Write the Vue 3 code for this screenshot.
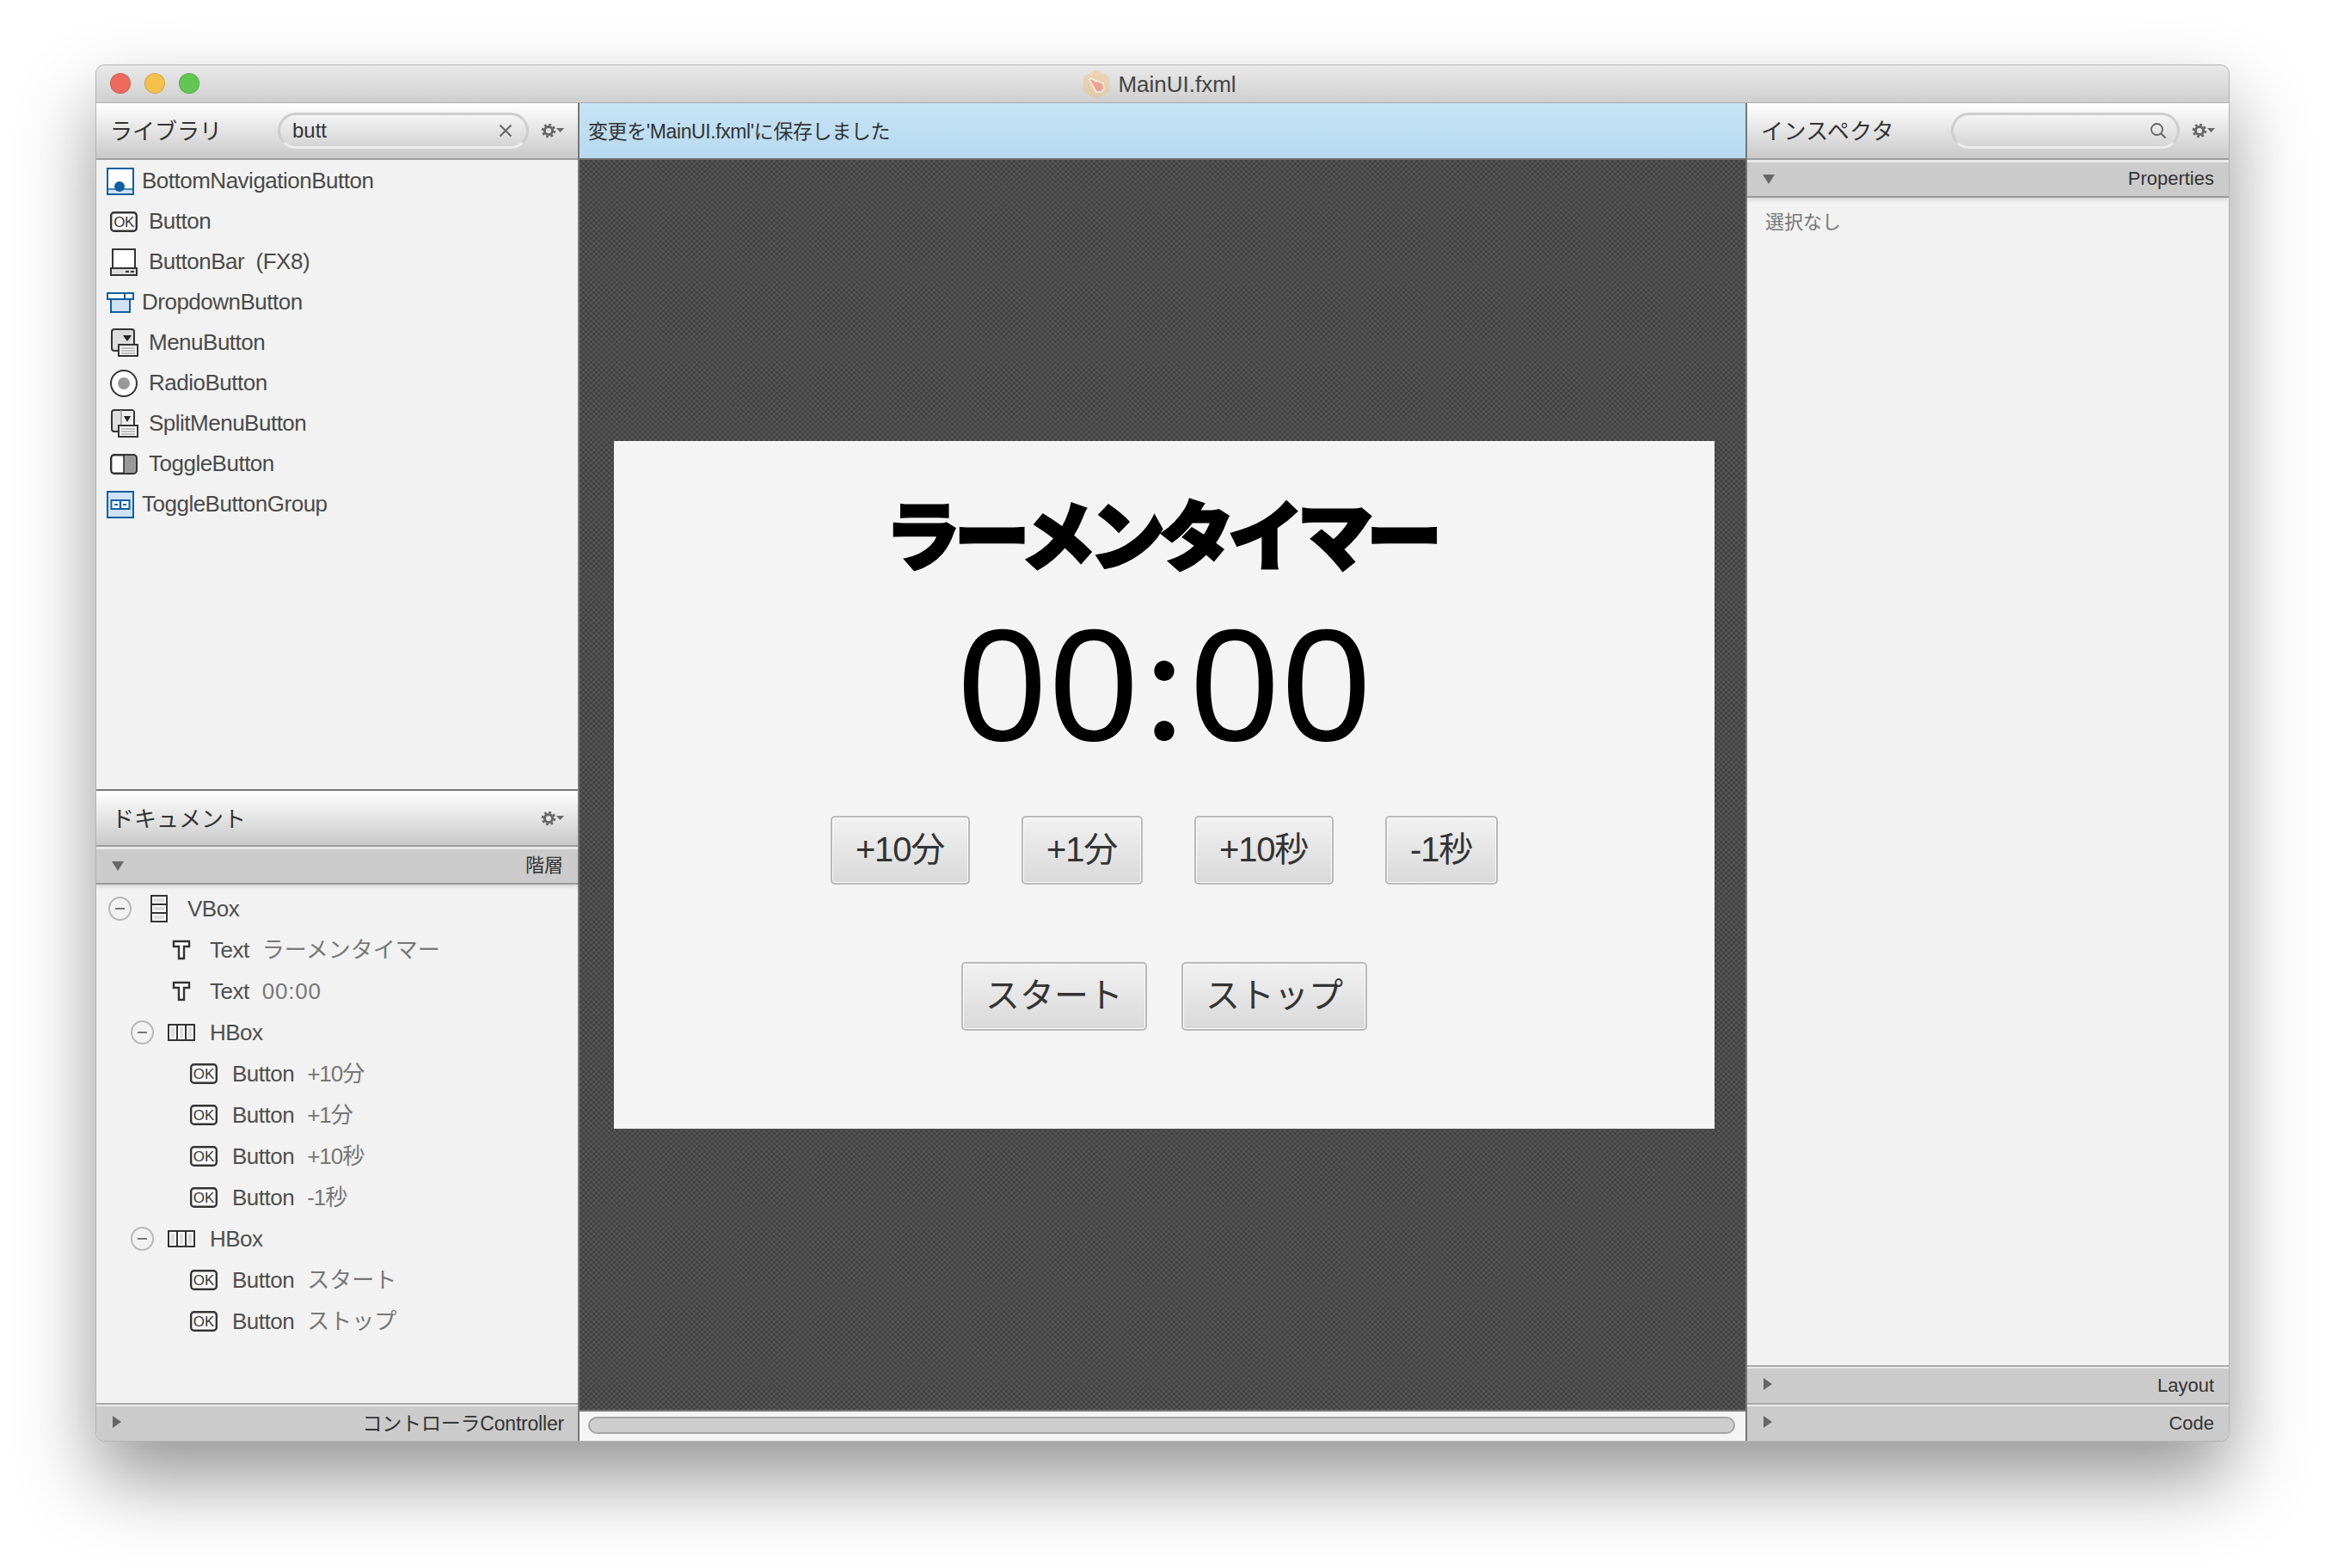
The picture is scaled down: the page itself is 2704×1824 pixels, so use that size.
<template>
  <div class="page">
    <svg class="defs" width="0" height="0">
      <symbol id="i-bottom" viewBox="0 0 32 32">
        <rect x="1" y="1" width="30" height="30" fill="#fff" stroke="#0f5f9e" stroke-width="2" />
        <rect x="2" y="25" width="28" height="5" fill="#cfe2f6" />
        <path d="M1 25h30" stroke="#0f5f9e" stroke-width="1.5" />
        <circle cx="15" cy="22" r="6" fill="#0f5f9e" />
      </symbol>
      <symbol id="i-ok" viewBox="0 0 32 24">
        <rect x="1.2" y="1.2" width="29.6" height="21.6" rx="3.5" fill="#fff" stroke="#333" stroke-width="2.4" />
        <text x="16" y="18.2" text-anchor="middle" font-family="Liberation Sans" font-size="17" fill="#333">OK</text>
      </symbol>
      <symbol id="i-bar" viewBox="0 0 32 32">
        <rect x="3" y="1" width="26" height="23" fill="#fff" stroke="#333" stroke-width="2" />
        <rect x="1" y="23" width="30" height="8" fill="#ddd" stroke="#333" stroke-width="2" />
        <path d="M18 27h4M24 27h4" stroke="#333" stroke-width="2" />
      </symbol>
      <symbol id="i-drop" viewBox="0 0 32 24">
        <path d="M1 1h30v7H1zM21 1v7" fill="#fff" stroke="#0f5f9e" stroke-width="2" />
        <rect x="5" y="8" width="22" height="15" fill="#cfe2f6" stroke="#0f5f9e" stroke-width="2" />
      </symbol>
      <symbol id="i-menu" viewBox="0 0 34 34">
        <rect x="2" y="1" width="26" height="25" rx="3" fill="#ddd" stroke="#333" stroke-width="2" />
        <path d="M15 8h10l-5 7z" fill="#222" />
        <rect x="10" y="19" width="22" height="13" fill="#fff" stroke="#333" stroke-width="2" />
        <path d="M13 23h16M13 26h16M13 29h16" stroke="#aaa" stroke-width="1.4" />
      </symbol>
      <symbol id="i-radio" viewBox="0 0 32 34">
        <circle cx="16" cy="17" r="15" fill="#fff" stroke="#333" stroke-width="2" />
        <circle cx="16" cy="17" r="7" fill="#999" />
      </symbol>
      <symbol id="i-split" viewBox="0 0 34 34">
        <rect x="2" y="1" width="26" height="25" rx="3" fill="#ddd" stroke="#333" stroke-width="2" />
        <rect x="13" y="2" width="14" height="23" fill="#eee" />
        <path d="M13 1v25" stroke="#999" stroke-width="1.5" />
        <path d="M16 8h8l-4 7z" fill="#222" />
        <rect x="10" y="19" width="22" height="13" fill="#fff" stroke="#333" stroke-width="2" />
        <path d="M13 23h16M13 26h16M13 29h16" stroke="#aaa" stroke-width="1.4" />
      </symbol>
      <symbol id="i-toggle" viewBox="0 0 32 24">
        <rect x="1.2" y="1.2" width="29.6" height="21.6" rx="3.5" fill="#fff" stroke="#333" stroke-width="2.4" />
        <path d="M16 2h11.5a2.3 2.3 0 0 1 2.3 2.3v15.4a2.3 2.3 0 0 1-2.3 2.3H16z" fill="#999" />
        <path d="M16 1v22" stroke="#333" stroke-width="1.6" />
      </symbol>
      <symbol id="i-group" viewBox="0 0 32 32">
        <rect x="1" y="1" width="30" height="30" fill="#cfe2f6" stroke="#0f5f9e" stroke-width="2" />
        <rect x="5.5" y="11" width="21" height="10" fill="#fff" stroke="#0f5f9e" stroke-width="2" />
        <path d="M16 10v12" stroke="#0f5f9e" stroke-width="2.4" />
        <path d="M9 16h4M19 16h4" stroke="#0f5f9e" stroke-width="2" />
      </symbol>
      <symbol id="i-vbox" viewBox="0 0 20 32">
        <rect x="1" y="1" width="18" height="30" fill="#fff" stroke="#333" stroke-width="2" />
        <path d="M1 11h18M1 21h18" stroke="#333" stroke-width="2" />
        <path d="M4 6h12M4 16h12M4 26h12" stroke="#ddd" stroke-width="4" />
      </symbol>
      <symbol id="i-hbox" viewBox="0 0 32 20">
        <rect x="1" y="1" width="30" height="18" fill="#fff" stroke="#333" stroke-width="2" />
        <path d="M11 1v18M21 1v18" stroke="#333" stroke-width="2" />
        <path d="M6 4v12M16 4v12M26 4v12" stroke="#ddd" stroke-width="4" />
      </symbol>
      <symbol id="i-text" viewBox="0 0 22 24">
        <path d="M2 2h18v6h-6v14H8V8H2z" fill="#fff" stroke="#333" stroke-width="2.4" />
      </symbol>
      <symbol id="i-gear" viewBox="0 0 28 18">
        <circle cx="9" cy="9" r="4.6" fill="none" stroke="#666" stroke-width="3" />
        <circle cx="9" cy="9" r="7" fill="none" stroke="#666" stroke-width="2.6" stroke-dasharray="2.9 2.6" />
        <path d="M18 6h9l-4.5 5z" fill="#666" />
      </symbol>
    </svg>

    <div class="window">
      <div class="titlebar">
        <svg class="logo" viewBox="0 0 34 34">
          <g fill="#f2c27c" opacity="0.45">
            <ellipse cx="17" cy="17" rx="11" ry="16.5" />
            <ellipse cx="17" cy="17" rx="11" ry="16.5" transform="rotate(60 17 17)" />
            <ellipse cx="17" cy="17" rx="11" ry="16.5" transform="rotate(120 17 17)" />
          </g>
          <path d="M9 12l2-2 6 4 1-1 7 3 1 6-3 4h-6l-4-7z" fill="#e8a491" stroke="#f8efe6" stroke-width="1.6" />
        </svg>
        <span class="win-title">MainUI.fxml</span>
        <div class="lights">
          <i class="light red"></i>
          <i class="light yellow"></i>
          <i class="light green"></i>
        </div>
      </div>

      <div class="main">
        <aside class="side">
          <div class="head">
            <span class="head-title">ライブラリ</span>
            <div class="search lib-search">
              <span class="query">butt</span>
              <svg class="clear" viewBox="0 0 16 16"><path d="M1.5 1.5l13 13M14.5 1.5l-13 13" stroke="#666" stroke-width="2" /></svg>
            </div>
            <svg class="gear"><use href="#i-gear" /></svg>
          </div>
          <div class="lib-list">
            <div v-for="item in library" :key="item.label" class="lib-row" :class="{ blue: item.blue }">
              <span class="lib-slot">
                <svg :width="item.w || 32" :height="item.h"><use :href="'#i-' + item.icon" /></svg>
              </span>
              <span>{{ item.label }}</span>
            </div>
          </div>

          <div class="head doc-head">
            <span class="head-title">ドキュメント</span>
            <svg class="gear"><use href="#i-gear" /></svg>
          </div>
          <div class="sub open">
            <i class="tri-down"></i>
            <span>階層</span>
          </div>
          <div class="tree">
            <div
              v-for="(node, i) in tree"
              :key="i"
              class="tree-row"
              :style="{ paddingLeft: 14 + node.level * 26 + 'px' }"
            >
              <span class="toggle-slot">
                <span v-if="node.open" class="minus"></span>
              </span>
              <span class="tree-ico">
                <svg :width="node.w" :height="node.h"><use :href="'#i-' + node.icon" /></svg>
              </span>
              <span class="name">{{ node.name }}</span>
              <span v-if="node.value" class="val" :class="valueClass(node.value)">{{ node.value }}</span>
            </div>
          </div>
          <div class="sub">
            <i class="tri-right"></i>
            <span class="ctrl">コントローラController</span>
          </div>
        </aside>

        <section class="center">
          <div class="message">変更を'MainUI.fxml'に保存しました</div>
          <div class="canvas">
            <div class="card">
              <div class="app-title">ラーメンタイマー</div>
              <div class="time">00<span class="colon">:</span>00</div>
              <div class="btn-row first">
                <button v-for="b in addButtons" :key="b" type="button" class="fx-btn add">{{ b }}</button>
              </div>
              <div class="btn-row second">
                <button type="button" class="fx-btn">スタート</button>
                <button type="button" class="fx-btn">ストップ</button>
              </div>
            </div>
          </div>
          <div class="hscroll"><div class="thumb"></div></div>
        </section>

        <aside class="side right">
          <div class="head">
            <span class="head-title">インスペクタ</span>
            <div class="search insp-search">
              <svg class="lens" viewBox="0 0 20 20">
                <circle cx="8.5" cy="8.5" r="6.5" fill="none" stroke="#666" stroke-width="1.8" />
                <path d="M13 13l5.5 5.5" stroke="#666" stroke-width="2" />
              </svg>
            </div>
            <svg class="gear"><use href="#i-gear" /></svg>
          </div>
          <div class="sub open">
            <i class="tri-down"></i>
            <span>Properties</span>
          </div>
          <div class="insp-body">選択なし</div>
          <div class="sub">
            <i class="tri-right"></i>
            <span>Layout</span>
          </div>
          <div class="sub">
            <i class="tri-right"></i>
            <span>Code</span>
          </div>
        </aside>
      </div>
    </div>
  </div>
</template>

<script setup>
const library = [
  { label: "BottomNavigationButton", icon: "bottom", h: 32, blue: true },
  { label: "Button", icon: "ok", h: 24 },
  { label: "ButtonBar  (FX8)", icon: "bar", h: 32 },
  { label: "DropdownButton", icon: "drop", h: 24, blue: true },
  { label: "MenuButton", icon: "menu", w: 34, h: 34 },
  { label: "RadioButton", icon: "radio", h: 34 },
  { label: "SplitMenuButton", icon: "split", w: 34, h: 34 },
  { label: "ToggleButton", icon: "toggle", h: 24 },
  { label: "ToggleButtonGroup", icon: "group", h: 32, blue: true }
];

const button = (value) => ({ level: 2, icon: "ok", w: 32, h: 24, name: "Button", value });

const tree = [
  { level: 0, open: true, icon: "vbox", w: 20, h: 32, name: "VBox" },
  { level: 1, icon: "text", w: 22, h: 24, name: "Text", value: "ラーメンタイマー" },
  { level: 1, icon: "text", w: 22, h: 24, name: "Text", value: "00:00" },
  { level: 1, open: true, icon: "hbox", w: 32, h: 20, name: "HBox" },
  button("+10分"),
  button("+1分"),
  button("+10秒"),
  button("-1秒"),
  { level: 1, open: true, icon: "hbox", w: 32, h: 20, name: "HBox" },
  button("スタート"),
  button("ストップ")
];

const addButtons = ["+10分", "+1分", "+10秒", "-1秒"];

function valueClass(value) {
  if (/^[-+]/.test(value)) return "tight";
  if (/^[0-9]/.test(value)) return "wide";
  return "";
}
</script>

<style>
body {
  background: #fff;
}
</style>

<style scoped>
.page {
  box-sizing: border-box;
  width: 2704px;
  height: 1824px;
  padding: 76px 112px 0;
  overflow: hidden;
  background: #fff;
  font-family: "Liberation Sans", "Noto Sans CJK JP", sans-serif;
}

.defs {
  display: none;
}

.window {
  display: flex;
  flex-direction: column;
  height: 1600px;
  border-radius: 10px;
  overflow: hidden;
  box-shadow: 0 0 0 1px #b4b4b4, 0 44px 90px rgba(0, 0, 0, 0.42);
}

.titlebar {
  position: relative;
  box-sizing: border-box;
  display: flex;
  align-items: center;
  justify-content: center;
  gap: 8px;
  height: 44px;
  padding-right: 8px;
  background: linear-gradient(#e9e9e9, #cfcfcf);
  border-bottom: 1px solid #adadad;
}

.logo {
  width: 34px;
  height: 34px;
}

.win-title {
  font-size: 26px;
  color: #444;
  padding-top: 2px;
}

.lights {
  position: absolute;
  left: 16px;
  top: 9px;
  display: flex;
  gap: 16px;
}

.light {
  box-sizing: border-box;
  width: 24px;
  height: 24px;
  border-radius: 50%;
  border: 1px solid rgba(0, 0, 0, 0.14);
}

.red {
  background: #ee6a5f;
}

.yellow {
  background: #f6c04f;
}

.green {
  background: #62c654;
}

.main {
  flex: 1;
  display: grid;
  grid-template-columns: 560px 1360px 560px;
  min-height: 0;
}

.side {
  display: flex;
  flex-direction: column;
  min-height: 0;
  background: #f2f2f2;
}

.head {
  box-sizing: border-box;
  display: flex;
  align-items: center;
  height: 66px;
  padding: 0 15px 0 17px;
  background: linear-gradient(#fff, #c9c9c9);
  border-bottom: 2px solid #a0a0a0;
  flex-shrink: 0;
}

.head-title {
  padding-top: 2px;
  font-size: 26px;
  line-height: 30px;
  color: #333;
  margin-right: auto;
  margin-left: -1px;
}

.right .head-title {
  letter-spacing: 0.4px;
}

.doc-head {
  height: 67px;
  border-top: 2px solid #777;
  padding-left: 19px;
}

.search {
  box-sizing: border-box;
  display: flex;
  align-items: center;
  justify-content: space-between;
  height: 42px;
  border-radius: 22px;
  border: 3px solid #cdcdcd;
  border-bottom-color: #ececec;
}

.lib-search {
  width: 292px;
  padding: 0 16px 0 14px;
}

.insp-search {
  width: 266px;
  padding: 0 12px;
  justify-content: flex-end;
}

.query {
  font-size: 24px;
  color: #333;
}

.clear {
  width: 16px;
  height: 16px;
}

.lens {
  width: 20px;
  height: 20px;
}

.gear {
  width: 28px;
  height: 18px;
  margin-left: 14px;
}

.lib-list {
  box-sizing: border-box;
  height: 732px;
  padding-top: 1px;
  flex-shrink: 0;
  overflow: hidden;
}

.lib-row {
  display: flex;
  align-items: center;
  height: 47px;
  padding-left: 12px;
  font-size: 26px;
  letter-spacing: -0.5px;
  color: #4a4a4a;
  white-space: pre;
}

.lib-slot {
  display: flex;
  align-items: center;
  box-sizing: border-box;
  width: 49px;
  padding-left: 4px;
}

.lib-row.blue .lib-slot {
  width: 41px;
  padding-left: 0;
}

.sub {
  position: relative;
  box-sizing: border-box;
  display: flex;
  align-items: center;
  justify-content: space-between;
  flex-shrink: 0;
  height: 44px;
  padding: 2px 17px 0 20px;
  border-top: 2px solid #aaa;
  background: linear-gradient(#e9e9e9 2px, #cbcbcb 2px);
  font-size: 22px;
  line-height: 26px;
  color: #333;
}

.sub.open {
  border-top: none;
  border-bottom: 2px solid #999;
  background: linear-gradient(#e9e9e9 3px, #cbcbcb 3px);
  box-shadow: 0 2px 5px rgba(0, 0, 0, 0.14);
}

.tri-down {
  width: 0;
  height: 0;
  border-left: 7px solid transparent;
  border-right: 7px solid transparent;
  border-top: 11px solid #666;
  margin-left: -2px;
}

.tri-right {
  width: 0;
  height: 0;
  margin-top: -4px;
  margin-left: -1px;
  border-top: 7px solid transparent;
  border-bottom: 7px solid transparent;
  border-left: 10px solid #666;
}

.tree {
  flex: 1;
  padding-top: 4px;
  overflow: hidden;
}

.tree-row {
  display: flex;
  align-items: center;
  height: 48px;
  font-size: 26px;
  line-height: 30px;
}

.toggle-slot {
  display: block;
  width: 27px;
  height: 28px;
  flex-shrink: 0;
}

.minus {
  position: relative;
  box-sizing: border-box;
  display: block;
  width: 27px;
  height: 28px;
  border-radius: 50%;
  border: 2px solid #b8b8b8;
}

.minus::after {
  content: "";
  position: absolute;
  left: 6px;
  right: 6px;
  top: 11px;
  height: 2px;
  background: #777;
}

.tree-ico {
  display: flex;
  align-items: center;
  justify-content: center;
  width: 64px;
  margin-right: 1px;
  flex-shrink: 0;
}

.name {
  color: #4f4f4f;
  margin-right: 15px;
  letter-spacing: -0.5px;
}

.val {
  color: #777;
}

.val.tight {
  letter-spacing: -1px;
}

.val.wide {
  letter-spacing: 0.8px;
}

.ctrl {
  font-size: 23px;
  letter-spacing: -0.2px;
  margin-right: -1px;
}

.center {
  display: flex;
  flex-direction: column;
  min-height: 0;
  border-left: 2px solid #777;
  border-right: 2px solid #777;
  background: #f4f4f4;
}

.message {
  box-sizing: border-box;
  display: flex;
  align-items: center;
  flex-shrink: 0;
  height: 66px;
  padding: 0 0 2px 10px;
  border-bottom: 2px solid #6f6f6f;
  background: linear-gradient(#c6e3f5, #b7d9ef);
  font-size: 23px;
  letter-spacing: -0.4px;
  color: #333;
}

.canvas {
  flex: 1;
  display: flex;
  align-items: center;
  justify-content: center;
  padding-left: 4px;
  min-height: 0;
  background-color: #4b4b4b;
  background-image: conic-gradient(#545454 25%, #434343 0 50%, #545454 0 75%, #434343 0);
  background-size: 6px 6px;
}

.card {
  display: flex;
  flex-direction: column;
  align-items: center;
  box-sizing: border-box;
  width: 1280px;
  height: 800px;
  padding-top: 53px;
  background: #f4f4f4;
}

.app-title {
  padding-right: 9px;
  font-size: 88px;
  line-height: 120px;
  font-weight: 900;
  letter-spacing: -7.5px;
  color: #000;
  -webkit-text-stroke: 3px #000;
}

.time {
  margin-top: 21px;
  padding-left: 3px;
  font-size: 186px;
  line-height: 180px;
  letter-spacing: 3px;
  color: #000;
}

.colon {
  font-family: Lato, "Liberation Sans", sans-serif;
  line-height: 0;
  margin: 0 4px;
}

.btn-row {
  display: flex;
  justify-content: center;
}

.btn-row.first {
  margin-top: 62px;
  gap: 60px;
}

.btn-row.second {
  margin-top: 90px;
  gap: 40px;
}

.fx-btn {
  box-sizing: border-box;
  height: 80px;
  padding: 0 26px 2px;
  border: 2px solid #b9b9b9;
  border-radius: 5px;
  background: linear-gradient(#f1f1f1, #d9d9d9);
  box-shadow: inset 0 0 0 1px #fbfbfb;
  font-family: inherit;
  font-size: 40px;
  line-height: 48px;
  color: #333;
}

.fx-btn.add {
  padding: 0 28px 2px 27px;
  letter-spacing: -1.2px;
}

.hscroll {
  box-sizing: border-box;
  flex-shrink: 0;
  height: 36px;
  padding: 6px 12px 8px 10px;
  border-top: 2px solid #777;
}

.thumb {
  box-sizing: border-box;
  height: 20px;
  border: 2px solid #a5a5a5;
  border-radius: 10px;
  background: #cdcdcd;
}

.insp-body {
  flex: 1;
  padding: 14px 21px;
  font-size: 22px;
  line-height: 30px;
  color: #777;
}
</style>
